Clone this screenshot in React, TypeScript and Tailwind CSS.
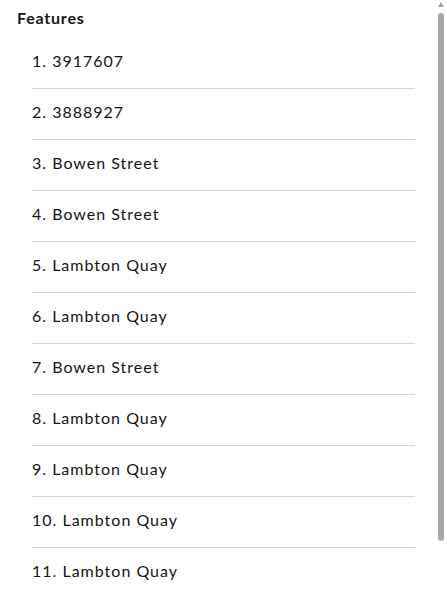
import React from 'react';

const features = [
  '3917607',
  '3888927',
  'Bowen Street',
  'Bowen Street',
  'Lambton Quay',
  'Lambton Quay',
  'Bowen Street',
  'Lambton Quay',
  'Lambton Quay',
  'Lambton Quay',
  'Lambton Quay',
];

const App = () => {
  return (
    <main className="flex h-[596px] overflow-hidden bg-white text-[#151515] font-['Lato',sans-serif]">
      <div className="flex-1 overflow-hidden pl-[17px] pr-[17px] pt-[8px]">
        {/* Header */}
        <h2 className="text-[16px] leading-5 font-bold tracking-[0.8px] mb-[10px]">Features</h2>

        {/* Feature list */}
        <ul className="pl-[15px]">
          {features.map((name, i) => (
            <li
              key={i}
              className="pt-[11px] pb-[15px] text-[16px] leading-6 tracking-[1px] border-b border-[#d6d6d6] last:border-b-0"
            >
              {i + 1}. {name}
            </li>
          ))}
        </ul>
      </div>

      {/* Scrollbar */}
      <div className="w-[15px] flex flex-col pl-[6px] pt-[2px]">
        <svg width="6" height="5" viewBox="0 0 6 5" className="block">
          <path d="M3 0 L6 5 L0 5 Z" fill="#a3a3a3" />
        </svg>
        <div className="mt-[6px] h-[528px] w-[6px] rounded-full bg-[#a8a8a8]" />
      </div>
    </main>
  );
};

export default App;
